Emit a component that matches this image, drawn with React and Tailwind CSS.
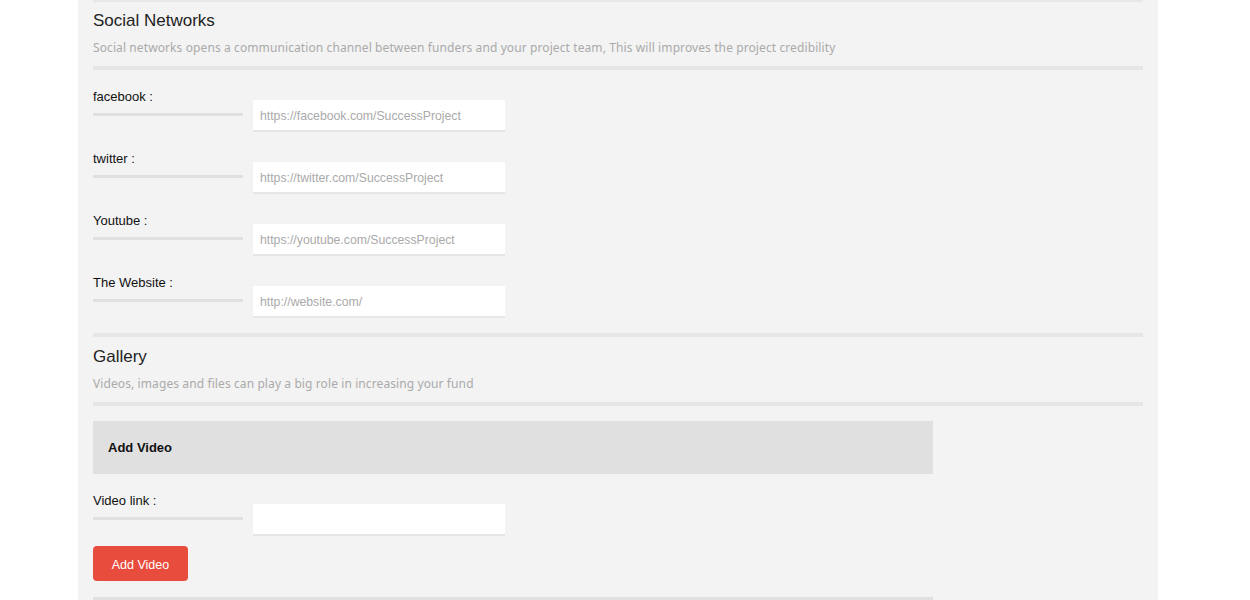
const socials = [
  { label: "facebook :", placeholder: "https://facebook.com/SuccessProject" },
  { label: "twitter :", placeholder: "https://twitter.com/SuccessProject" },
  { label: "Youtube :", placeholder: "https://youtube.com/SuccessProject" },
  { label: "The Website :", placeholder: "http://website.com/" },
];

function FieldRow({ label, placeholder, className = "" }) {
  return (
    <div className={`flex items-start gap-[10px] ${className}`}>
      <div className="w-[150px]">
        <label className="block pt-[1px] text-[13px] leading-[18px] text-[#111]">{label}</label>
        <div className="mt-[7px] h-[3px] bg-[#e0e0e0]" />
      </div>
      <input
        type="text"
        placeholder={placeholder}
        className="mt-[13px] h-[32px] w-[252px] bg-white border-b-2 border-[#e6e6e6] pl-[7px] pt-[2px] text-[12.25px] text-[#333] outline-none placeholder:text-[#aaa]"
      />
    </div>
  );
}

function SectionHead({ title, desc }) {
  return (
    <>
      <h2 className="pt-[1px] text-[17px] leading-[24px] text-[#222]">{title}</h2>
      <p
        className="mt-[6px] text-[12px] leading-[18px] tracking-[0.1px] text-[#aaa]"
        style={{ fontFamily: '"Noto Sans", "Liberation Sans", sans-serif' }}
      >
        {desc}
      </p>
      <div className="mt-[9px] h-[4px] bg-[#e6e6e6]" />
    </>
  );
}

export default function App() {
  return (
    <div className="min-h-[600px] bg-white" style={{ fontFamily: '"Liberation Sans", Arial, sans-serif' }}>
      <div className="ml-[78px] w-[1080px] h-[600px] overflow-hidden bg-[#f3f3f3] px-[15px]">
        <div className="h-[2px] bg-[#e8e8e8]" />

        {/* Social Networks */}
        <div className="mt-[6px]">
          <SectionHead
            title="Social Networks"
            desc="Social networks opens a communication channel between funders and your project team, This will improves the project credibility"
          />
        </div>
        <div className="mt-[17px] flex flex-col gap-[17px]">
          {socials.map((s) => (
            <FieldRow key={s.label} label={s.label} placeholder={s.placeholder} />
          ))}
        </div>
        <div className="mt-[15px] h-[4px] bg-[#e6e6e6]" />

        {/* Gallery */}
        <div className="mt-[7px]">
          <SectionHead title="Gallery" desc="Videos, images and files can play a big role in increasing your fund" />
        </div>

        <div className="mt-[15px] w-[840px] h-[53px] bg-[#e0e0e0] flex items-center px-[15px]">
          <h3 className="text-[13px] font-bold text-[#111]">Add Video</h3>
        </div>

        <FieldRow label="Video link :" placeholder="" className="mt-[17px]" />

        <button className="mt-[10px] h-[35px] w-[95px] rounded-[4px] bg-[#e74c3c] pt-[4px] text-[12.5px] text-white">
          Add Video
        </button>

        <div className="mt-[16px] w-[840px] h-[4px] bg-[#e0e0e0]" />
      </div>
    </div>
  );
}
